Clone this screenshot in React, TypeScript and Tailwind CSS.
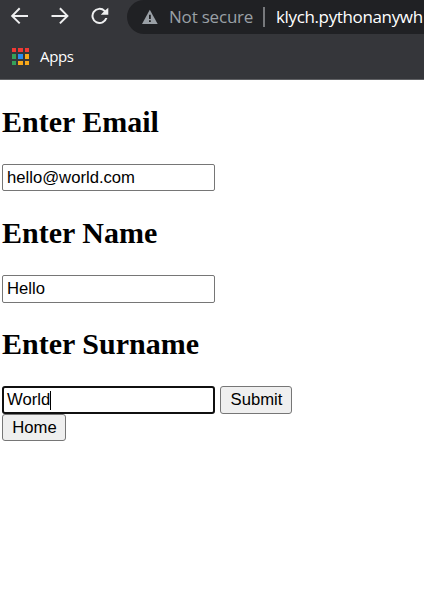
import React from "react";

const appColors = [
  "bg-[#f03a35]", "bg-[#f03a35]", "bg-[#f03a35]",
  "bg-[#34a05a]", "bg-[#2a8cf0]", "bg-[#f9a81a]",
  "bg-[#34a05a]", "bg-[#f9a81a]", "bg-[#f9a81a]",
];

function Toolbar() {
  return (
    <header className="h-20 overflow-hidden border-b border-[#606164] bg-[#35363a] font-['Open_Sans',sans-serif]">
      <div className="flex h-[34px]">
        <div className="flex w-[127px] shrink-0 items-start gap-5 pt-1.5 pl-2.5 text-[#eeeff0]">
          <svg width="20" height="20" viewBox="0 0 20 20" fill="none" stroke="currentColor" strokeWidth="2">
            <path d="M18 9.9H3M9.7 2.3L2.2 9.9l7.5 7.5" />
          </svg>
          <svg width="20" height="20" viewBox="0 0 20 20" fill="none" stroke="currentColor" strokeWidth="2">
            <path d="M1.5 9.9H17M9.9 2.3l7.5 7.6-7.5 7.5" />
          </svg>
          <svg width="20" height="20" viewBox="0 0 20 20" fill="currentColor">
            <path d="M15.3 4.2A8.1 8.1 0 1 0 17.4 12.1H15.3A6.1 6.1 0 1 1 13.9 5.6L10.8 8.8H18.3V1.8Z" />
          </svg>
        </div>
        <div className="flex min-w-0 flex-1 rounded-bl-[17px] rounded-tl-[17px] bg-[#202124] pl-[15px] whitespace-nowrap">
          <svg className="mt-[9px] shrink-0" width="16" height="15" viewBox="0 0 16 15">
            <path d="M7.8 0.7L15.7 15H0Z" fill="#9aa0a6" />
            <path d="M7 5.8h1.8v4.1H7zM7 11.3h1.8v1.8H7z" fill="#202124" />
          </svg>
          <span className="ml-[11px] w-[94px] shrink-0 pt-[5px] text-[17px] leading-6 tracking-[-0.2px] text-[#9aa0a6]">Not secure</span>
          <span className="mt-[7px] h-5 w-0.5 shrink-0 bg-[#77797c]" />
          <span className="ml-[11px] pt-[5px] text-[17px] leading-6 tracking-[-0.36px] text-white">klych.pythonanywh</span>
        </div>
      </div>
      <div className="flex pt-3.5 pl-3">
        <div className="grid h-[17px] w-[17px] grid-cols-3 gap-[2px]">
          {appColors.map((color, i) => <span key={i} className={color} />)}
        </div>
        <span className="ml-[11px] -mt-0.5 text-[15px] leading-5 tracking-[-0.35px] text-white">Apps</span>
      </div>
    </header>
  );
}

function Heading({ children }: { children: React.ReactNode }) {
  return <h2 className="font-['Liberation_Serif',serif] text-[30px] leading-[34px] font-bold">{children}</h2>;
}

export default function App() {
  return (
    <div className="h-[599px] overflow-hidden bg-white font-['Liberation_Sans',sans-serif] text-[16.67px] text-black">
      <Toolbar />
      <main className="pt-[25px] pl-0.5">
        <Heading>Enter Email</Heading>
        <input aria-label="Email" defaultValue="hello@world.com" className="mt-[25px] block h-[27px] w-[213px] rounded-[2px] border border-[#767676] px-1 leading-5 outline-none" />
        <div className="mt-[25px]"><Heading>Enter Name</Heading></div>
        <input aria-label="Name" defaultValue="Hello" className="mt-[25px] block h-7 w-[213px] rounded-[2px] border border-[#767676] px-1 leading-5 outline-none" />
        <div className="mt-[24px]"><Heading>Enter Surname</Heading></div>
        <div className="mt-[25px] flex gap-[5px]">
          <div role="textbox" className="flex h-7 w-[213px] items-center rounded-[3px] border-2 border-[#101010] pl-[3px] leading-5">
            <span>World</span><span className="h-[19px] w-px bg-black" />
          </div>
          <button className="h-7 w-[72px] rounded-[3px] border border-[#767676] bg-[#efefef] pl-px leading-5">Submit</button>
        </div>
        <button className="block h-[27px] w-16 rounded-[3px] border border-[#767676] bg-[#efefef] pl-px leading-5">Home</button>
      </main>
    </div>
  );
}
